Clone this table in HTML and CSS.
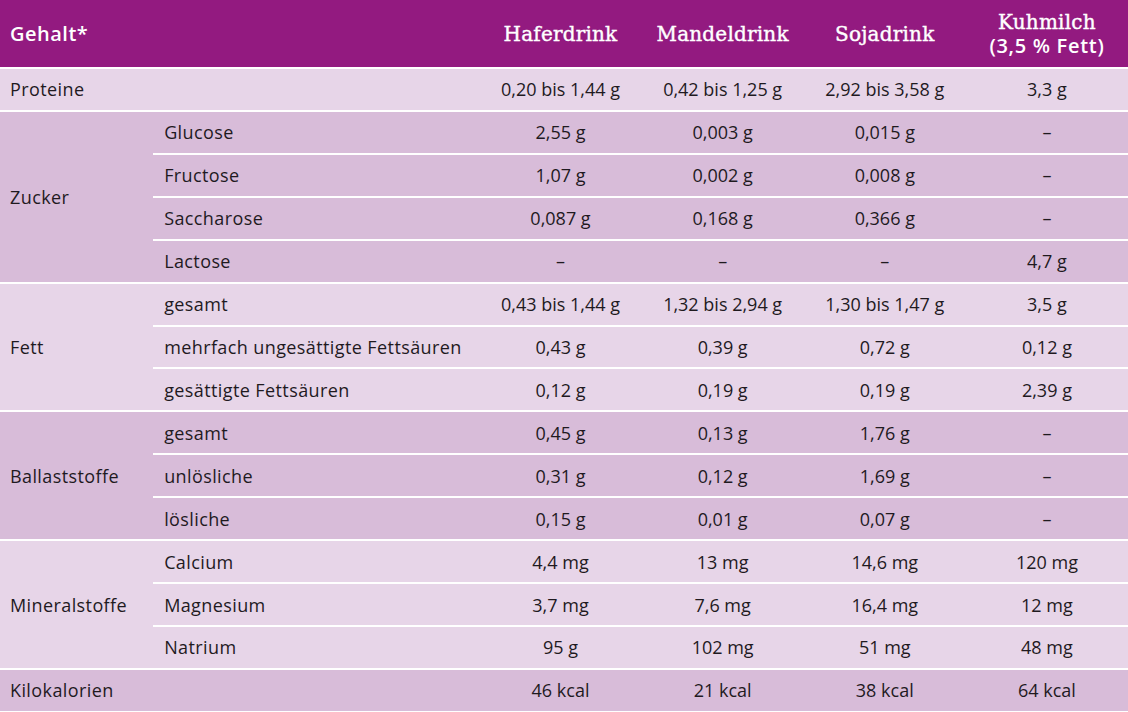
FILE: index.html
```html
<!DOCTYPE html>
<html lang="de">
<head>
<meta charset="utf-8">
<link rel="stylesheet" href="styles.css">
</head>
<body>
<table class="nt">
<colgroup>
<col class="c-group"><col class="c-sub"><col class="c-val"><col class="c-val"><col class="c-val"><col class="c-val">
</colgroup>
<thead>
<tr class="head">
<th class="h-gehalt" colspan="2">Gehalt*</th>
<th class="h-prod">Haferdrink</th>
<th class="h-prod">Mandeldrink</th>
<th class="h-prod">Sojadrink</th>
<th class="h-prod h-milk">Kuhmilch<br><span class="h-sub">(3,5 % Fett)</span></th>
</tr>
</thead>
<tbody class="light">
<tr><td class="lab" colspan="2">Proteine</td><td>0,20 bis 1,44 g</td><td>0,42 bis 1,25 g</td><td>2,92 bis 3,58 g</td><td>3,3 g</td></tr>
</tbody>
<tbody class="dark">
<tr><td class="lab" rowspan="4">Zucker</td><td class="sub">Glucose</td><td>2,55 g</td><td>0,003 g</td><td>0,015 g</td><td>–</td></tr>
<tr><td class="sub">Fructose</td><td>1,07 g</td><td>0,002 g</td><td>0,008 g</td><td>–</td></tr>
<tr><td class="sub">Saccharose</td><td>0,087 g</td><td>0,168 g</td><td>0,366 g</td><td>–</td></tr>
<tr><td class="sub">Lactose</td><td>–</td><td>–</td><td>–</td><td>4,7 g</td></tr>
</tbody>
<tbody class="light">
<tr><td class="lab" rowspan="3">Fett</td><td class="sub">gesamt</td><td>0,43 bis 1,44 g</td><td>1,32 bis 2,94 g</td><td>1,30 bis 1,47 g</td><td>3,5 g</td></tr>
<tr><td class="sub">mehrfach ungesättigte Fettsäuren</td><td>0,43 g</td><td>0,39 g</td><td>0,72 g</td><td>0,12 g</td></tr>
<tr><td class="sub">gesättigte Fettsäuren</td><td>0,12 g</td><td>0,19 g</td><td>0,19 g</td><td>2,39 g</td></tr>
</tbody>
<tbody class="dark">
<tr><td class="lab" rowspan="3">Ballaststoffe</td><td class="sub">gesamt</td><td>0,45 g</td><td>0,13 g</td><td>1,76 g</td><td>–</td></tr>
<tr><td class="sub">unlösliche</td><td>0,31 g</td><td>0,12 g</td><td>1,69 g</td><td>–</td></tr>
<tr><td class="sub">lösliche</td><td>0,15 g</td><td>0,01 g</td><td>0,07 g</td><td>–</td></tr>
</tbody>
<tbody class="light">
<tr><td class="lab" rowspan="3">Mineralstoffe</td><td class="sub">Calcium</td><td>4,4 mg</td><td>13 mg</td><td>14,6 mg</td><td>120 mg</td></tr>
<tr><td class="sub">Magnesium</td><td>3,7 mg</td><td>7,6 mg</td><td>16,4 mg</td><td>12 mg</td></tr>
<tr><td class="sub">Natrium</td><td>95 g</td><td>102 mg</td><td>51 mg</td><td>48 mg</td></tr>
</tbody>
<tbody class="dark">
<tr><td class="lab" colspan="2">Kilokalorien</td><td>46 kcal</td><td>21 kcal</td><td>38 kcal</td><td>64 kcal</td></tr>
</tbody>
</table>
</body>
</html>
```
FILE: styles.css
```css
html, body {
  margin: 0;
  padding: 0;
  background: #ffffff;
}
.nt {
  width: 1128px;
  border-collapse: collapse;
  table-layout: fixed;
  font-family: "Open Sans", "Liberation Sans", sans-serif;
  font-size: 18px;
  color: #1f1a1f;
}
.c-group { width: 153px; }
.c-sub { width: 326px; }
.c-val { width: 162px; }
.head {
  background: #931a80;
  color: #ffffff;
  height: 68px;
}
.head th {
  padding: 0;
  font-weight: normal;
  vertical-align: middle;
}
.h-gehalt {
  text-align: left;
  padding-left: 10px !important;
  font-family: "Open Sans", "Liberation Sans", sans-serif;
  font-weight: 600 !important;
  font-size: 20px;
  letter-spacing: 0.5px;
}
.h-prod {
  text-align: center;
  font-family: "DejaVu Serif", "Liberation Serif", serif;
  font-size: 20px;
  line-height: 24px;
  letter-spacing: 0.2px;
  -webkit-text-stroke: 0.4px #ffffff;
}
.h-sub {
  font-family: "Open Sans", "Liberation Sans", sans-serif;
  font-weight: 600;
  font-size: 20px;
  letter-spacing: 0.7px;
  -webkit-text-stroke: 0;
}
td {
  height: 40.93px;
  padding: 0;
  text-align: center;
  vertical-align: middle;
  border-top: 2px solid #ffffff;
  white-space: nowrap;
}
.light td { background: #e7d5e8; }
.dark td { background: #d8bcd9; }
td.lab {
  text-align: left;
  padding-left: 10px;
  letter-spacing: 0.4px;
}
td.sub {
  text-align: left;
  padding-left: 11px;
  letter-spacing: 0.4px;
}
```
